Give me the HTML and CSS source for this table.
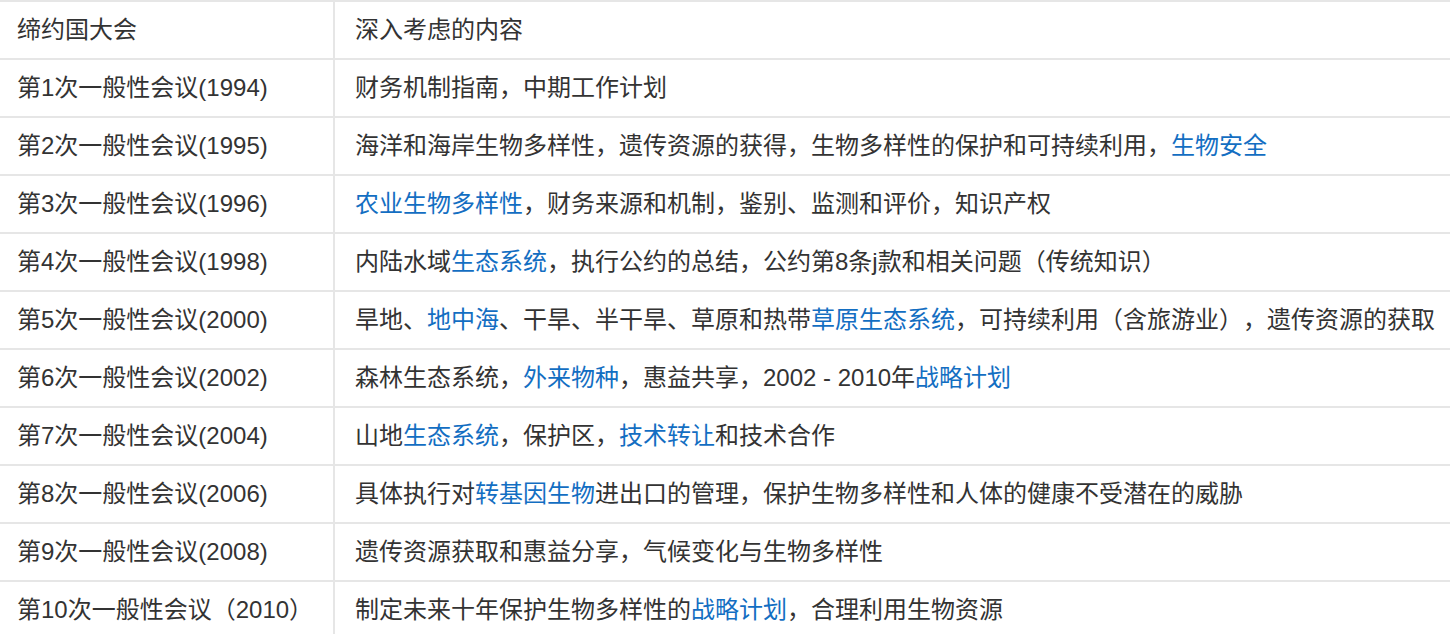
FILE: index.html
```html
<!DOCTYPE html>
<html lang="zh-CN">
<head>
<meta charset="utf-8">
<title>缔约国大会</title>
<link rel="stylesheet" href="styles.css">
</head>
<body>
<table class="cop-table">
  <tbody>
    <tr><td class="c1">缔约国大会</td><td class="c2">深入考虑的内容</td></tr>
    <tr><td class="c1">第1次一般性会议(1994)</td><td class="c2">财务机制指南，中期工作计划</td></tr>
    <tr><td class="c1">第2次一般性会议(1995)</td><td class="c2">海洋和海岸生物多样性，遗传资源的获得，生物多样性的保护和可持续利用，<a class="lk">生物安全</a></td></tr>
    <tr><td class="c1">第3次一般性会议(1996)</td><td class="c2"><a class="lk">农业生物多样性</a>，财务来源和机制，鉴别、监测和评价，知识产权</td></tr>
    <tr><td class="c1">第4次一般性会议(1998)</td><td class="c2">内陆水域<a class="lk">生态系统</a>，执行公约的总结，公约第8条j款和相关问题（传统知识）</td></tr>
    <tr><td class="c1">第5次一般性会议(2000)</td><td class="c2">旱地、<a class="lk">地中海</a>、干旱、半干旱、草原和热带<a class="lk">草原生态系统</a>，可持续利用（含旅游业），遗传资源的获取</td></tr>
    <tr><td class="c1">第6次一般性会议(2002)</td><td class="c2">森林生态系统，<a class="lk">外来物种</a>，惠益共享，2002 - 2010年<a class="lk">战略计划</a></td></tr>
    <tr><td class="c1">第7次一般性会议(2004)</td><td class="c2">山地<a class="lk">生态系统</a>，保护区，<a class="lk">技术转让</a>和技术合作</td></tr>
    <tr><td class="c1">第8次一般性会议(2006)</td><td class="c2">具体执行对<a class="lk">转基因生物</a>进出口的管理，保护生物多样性和人体的健康不受潜在的威胁</td></tr>
    <tr><td class="c1">第9次一般性会议(2008)</td><td class="c2">遗传资源获取和惠益分享，气候变化与生物多样性</td></tr>
    <tr><td class="c1">第10次一般性会议（2010）</td><td class="c2">制定未来十年保护生物多样性的<a class="lk">战略计划</a>，合理利用生物资源</td></tr>
  </tbody>
</table>
</body>
</html>
```
FILE: styles.css
```css
html, body {
  margin: 0;
  padding: 0;
  background: #ffffff;
}
body {
  font-family: "Liberation Sans", "Noto Sans CJK SC", sans-serif;
  font-size: 24px;
  color: #333333;
  overflow: hidden;
  text-spacing-trim: space-all;
}
.cop-table {
  border-collapse: collapse;
  width: 1450px;
  table-layout: fixed;
}
.cop-table td {
  height: 56px;
  padding: 0;
  border-top: 2px solid #e6e6e6;
  border-bottom: 2px solid #e6e6e6;
  vertical-align: middle;
  white-space: nowrap;
  line-height: 30px;
}
.cop-table .c1 {
  width: 316px;
  padding-left: 17px;
  border-right: 2px solid #e6e6e6;
}
.cop-table .c2 {
  padding-left: 20px;
}
.lk {
  color: #136ec2;
  text-decoration: none;
}
```
